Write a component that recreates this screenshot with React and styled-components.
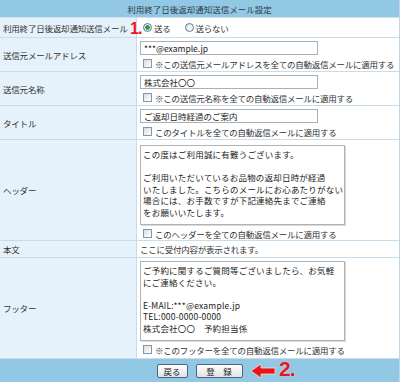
import styled, { createGlobalStyle } from "styled-components";

const GlobalStyle = createGlobalStyle`
  body {
    margin: 0;
    background: #fff;
  }
`

const Radio = ({ checked, label }) => (
  <RadioItem>
    <RadioDot $checked={checked} />
    {label}
  </RadioItem>
)

const Check = ({ children }) => (
  <CheckLine>
    <CheckBox />
    <span>{children}</span>
  </CheckLine>
)

const headerText = `この度はご利用誠に有難うございます。

ご利用いただいているお品物の返却日時が経過
いたしました。こちらのメールにお心あたりがない
場合には、お手数ですが下記連絡先までご連絡
をお願いいたします。`

const footerText = `ご予約に関するご質問等ございましたら、お気軽
にご連絡ください。

E-MAIL:***@example.jp
TEL:000-0000-0000
株式会社〇〇　予約担当係`

const App = () => {
  return (
    <>
      <GlobalStyle />
      <Frame>
        <TitleBar>利用終了日後返却通知送信メール設定</TitleBar>

        <Row $h={20}>
          <Label>利用終了日後返却通知送信メール</Label>
          <Value $center>
            <RadioGroup>
              <Radio checked label="送る" />
              <Radio label="送らない" />
            </RadioGroup>
          </Value>
        </Row>

        <Row $h={34}>
          <Label>送信元メールアドレス</Label>
          <Value>
            <TextInput readOnly defaultValue="***@example.jp" />
            <Check>※この送信元メールアドレスを全ての自動返信メールに適用する</Check>
          </Value>
        </Row>

        <Row $h={34}>
          <Label>送信元名称</Label>
          <Value>
            <TextInput readOnly defaultValue="株式会社〇〇" />
            <Check>※この送信元名称を全ての自動返信メールに適用する</Check>
          </Value>
        </Row>

        <Row $h={34}>
          <Label>タイトル</Label>
          <Value>
            <TextInput readOnly defaultValue="ご返却日時経過のご案内" />
            <Check>このタイトルを全ての自動返信メールに適用する</Check>
          </Value>
        </Row>

        <Row $h={101}>
          <Label>ヘッダー</Label>
          <Value $top={5}>
            <TextArea readOnly wrap="off" defaultValue={headerText} />
            <Check>このヘッダーを全ての自動返信メールに適用する</Check>
          </Value>
        </Row>

        <Row $h={17}>
          <Label>本文</Label>
          <Value $center>ここに受付内容が表示されます。</Value>
        </Row>

        <Row $h={101}>
          <Label>フッター</Label>
          <Value>
            <TextArea readOnly wrap="off" defaultValue={footerText} />
            <Check>※このフッターを全ての自動返信メールに適用する</Check>
          </Value>
        </Row>

        <ButtonBar>
          <Button $w={31}>戻る</Button>
          <Button $w={47}>登　録</Button>
          <Arrow width="26" height="16" viewBox="0 0 26 16">
            <polygon
              points="1,8 11,1 11,5 25,5 25,11 11,11 11,15"
              fill="#e8141c"
              stroke="#fbd6d6"
              strokeWidth="0.8"
              strokeLinejoin="round"
            />
          </Arrow>
          <Step $left={279} $top={-3} $size={21}>2.</Step>
        </ButtonBar>

        <Step $left={130} $top={19} $size={16}>1.</Step>
      </Frame>
    </>
  )
}

export default App;

const Frame = styled.div`
  position: relative;
  width: 400px;
  height: 382px;
  overflow: hidden;
  box-sizing: border-box;
  border-right: 1px solid #bfd6e6;
  font-family: "Noto Sans CJK JP", "Noto Sans", sans-serif;
  font-size: 8.5px;
  color: #333;
`
const TitleBar = styled.div`
  height: 18px;
  box-sizing: border-box;
  border-bottom: 1px solid #cfe2ef;
  background-color: #93c8e4;
  display: flex;
  align-items: center;
  justify-content: center;
  color: #2a3a48;
`
const Row = styled.div`
  display: grid;
  grid-template-columns: 137px 1fr;
  height: ${props => props.$h}px;
  box-sizing: border-box;
  border-bottom: 1px solid #c8ddec;
`
const Label = styled.div`
  display: flex;
  align-items: center;
  padding-left: 3px;
  background-color: #e6f2fb;
  border-right: 1px solid #c8ddec;
  white-space: nowrap;
  letter-spacing: -0.2px;
`
const Value = styled.div`
  display: flex;
  flex-direction: column;
  justify-content: ${props => props.$center ? "center" : "flex-start"};
  padding: ${props => props.$center ? 0 : (props.$top || 3)}px 0 0 3px;
  letter-spacing: -0.25px;
  white-space: nowrap;
`
const RadioGroup = styled.div`
  display: flex;
  align-items: center;
  gap: 14px;
  padding-left: 3px;
`
const RadioItem = styled.label`
  display: flex;
  align-items: center;
  gap: 2px;
`
const RadioDot = styled.span`
  width: 9px;
  height: 9px;
  box-sizing: border-box;
  border-radius: 50%;
  border: 1px solid #4f78a8;
  background: ${props => props.$checked
    ? "radial-gradient(circle, #2fb02f 0, #1f9a1f 2px, #eef3ee 2.5px, #e4e8e2 100%)"
    : "linear-gradient(135deg, #e6e6e0, #fff)"};
`
const TextInput = styled.input`
  width: 178px;
  height: 14px;
  box-sizing: border-box;
  border: 1px solid #a9b0b6;
  padding: 0 3px;
  font-family: inherit;
  font-size: 8.5px;
  color: #222;
  background: #fff;
  outline: none;
`
const TextArea = styled.textarea`
  width: 205px;
  height: 80px;
  box-sizing: border-box;
  border: 1px solid #b2b2b2;
  box-shadow: 1px 1px 0 #dadada;
  padding: 3px 2px;
  margin: 0;
  font-family: inherit;
  font-size: 8.5px;
  line-height: 11.6px;
  letter-spacing: 0.2px;
  color: #222;
  resize: none;
  overflow: hidden;
  white-space: pre;
  outline: none;
`
const CheckLine = styled.div`
  display: flex;
  align-items: center;
  gap: 3px;
  height: 11px;
  margin-top: 3px;
  padding-left: 3px;
`
const CheckBox = styled.span`
  width: 9px;
  height: 9px;
  box-sizing: border-box;
  border: 1px solid #7f97b2;
  background: linear-gradient(135deg, #dcdcd6, #fff);
  flex: none;
`
const ButtonBar = styled.div`
  position: relative;
  height: 23px;
  background-color: #93c8e4;
  display: flex;
  align-items: center;
  justify-content: center;
  gap: 8px;
`
const Button = styled.button`
  width: ${props => props.$w}px;
  height: 14px;
  padding: 0;
  box-sizing: border-box;
  border: 1px solid #4a6684;
  border-radius: 2px;
  background: linear-gradient(#ffffff, #e2e2e2);
  font-family: "Noto Sans CJK JP", sans-serif;
  font-size: 8.5px;
  line-height: 12px;
  color: #222;
`
const Arrow = styled.svg`
  position: absolute;
  left: 250px;
  top: 4px;
`
const Step = styled.span`
  position: absolute;
  left: ${props => props.$left}px;
  top: ${props => props.$top}px;
  font-family: "Liberation Sans", Arial, sans-serif;
  font-weight: bold;
  font-size: ${props => props.$size}px;
  line-height: 1.2;
  color: #e8141c;
  text-shadow: 0 0 1px #fff;
  letter-spacing: -1px;
`
